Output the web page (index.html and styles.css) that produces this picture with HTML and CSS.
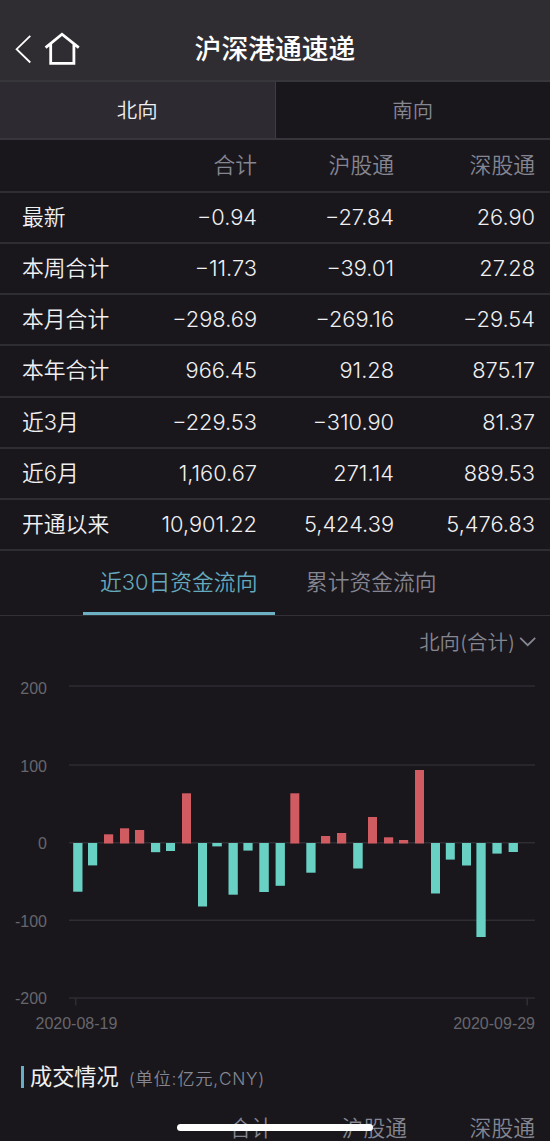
FILE: index.html
```html
<!DOCTYPE html>
<html lang="zh-CN">
<head>
  <meta charset="UTF-8" />
  <meta name="viewport" content="width=device-width, initial-scale=1.0"/>
  <title>沪深港通速递</title>
  <link rel="stylesheet" href="styles.css">
</head>
<body>
  <header class="topbar">
    <div class="topbar-icons">
      <svg class="icon-back" width="18" height="30" viewBox="0 0 18 30"><path d="M16.3 1.8 2.6 15.2 16.3 28.5"/></svg>
      <svg class="icon-home" width="36" height="34" viewBox="0 0 36 34"><path d="M1.6 15.6 18 2.2 34.8 15.6M6.7 12V31.3H29.9V12"/></svg>
    </div>
    <h1>沪深港通速递</h1>
  </header>

  <nav class="direction">
    <a class="active">北向</a>
    <a>南向</a>
  </nav>

  <section class="flow-table">
    <div class="row head"><span></span><span>合计</span><span>沪股通</span><span>深股通</span></div>
    <div class="row"><span>最新</span><span>−0.94</span><span>−27.84</span><span>26.90</span></div>
    <div class="row"><span>本周合计</span><span>−11.73</span><span>−39.01</span><span>27.28</span></div>
    <div class="row"><span>本月合计</span><span>−298.69</span><span>−269.16</span><span>−29.54</span></div>
    <div class="row"><span>本年合计</span><span>966.45</span><span>91.28</span><span>875.17</span></div>
    <div class="row"><span>近3月</span><span>−229.53</span><span>−310.90</span><span>81.37</span></div>
    <div class="row"><span>近6月</span><span>1,160.67</span><span>271.14</span><span>889.53</span></div>
    <div class="row"><span>开通以来</span><span>10,901.22</span><span>5,424.39</span><span>5,476.83</span></div>
  </section>

  <nav class="chart-tabs">
    <a class="active">近30日资金流向</a>
    <a>累计资金流向</a>
  </nav>

  <div class="chart-filter">
    <span>北向(合计)</span>
    <svg width="17" height="12" viewBox="0 0 17 12"><path d="M1.2 2.8 8.7 10.2 16.2 2.8"/></svg>
  </div>

  <svg class="chart" width="550" height="380" viewBox="0 666 550 380">
    <g class="grid">
      <path d="M69 686H535M69 765H535M69 842.7H535M69 920.2H535M69 998H535M75.7 998V1005.5M527.2 998V1005.5"/>
    </g>
    <g class="axis">
      <text x="47" y="694" text-anchor="end">200</text>
      <text x="47" y="771.5" text-anchor="end">100</text>
      <text x="47" y="849.4" text-anchor="end">0</text>
      <text x="47" y="927" text-anchor="end">-100</text>
      <text x="47" y="1004.4" text-anchor="end">-200</text>
      <text x="35.5" y="1029.4">2020-08-19</text>
      <text x="535" y="1029.4" text-anchor="end">2020-09-29</text>
    </g>
    <!-- inflow -->
    <g class="up">
      <rect x="104" y="834.3" width="9.2" height="9.2"/>
      <rect x="120" y="828.3" width="9.2" height="15.2"/>
      <rect x="135" y="830" width="9.2" height="13.5"/>
      <rect x="182" y="793.3" width="9" height="50.2"/>
      <rect x="290.3" y="793.3" width="9" height="50.2"/>
      <rect x="321" y="836" width="9.2" height="7.5"/>
      <rect x="337" y="833" width="9.2" height="10.5"/>
      <rect x="368" y="817" width="9" height="26.5"/>
      <rect x="384" y="837.3" width="9.2" height="6.2"/>
      <rect x="399" y="840" width="9.2" height="3.5"/>
      <rect x="415" y="770" width="9" height="73.5"/>
    </g>
    <!-- outflow -->
    <g class="down">
      <rect x="73.2" y="843" width="9.3" height="48.7"/>
      <rect x="88" y="843" width="9.2" height="22.4"/>
      <rect x="151" y="843" width="9.2" height="9.2"/>
      <rect x="166" y="843" width="9" height="8"/>
      <rect x="198" y="843" width="9" height="63.5"/>
      <rect x="212.3" y="843" width="9.5" height="3.4"/>
      <rect x="228.5" y="843" width="9.3" height="51.7"/>
      <rect x="243.4" y="843" width="9.2" height="7.6"/>
      <rect x="259.3" y="843" width="9.5" height="49"/>
      <rect x="275.6" y="843" width="9.3" height="42.8"/>
      <rect x="306.3" y="843" width="9.3" height="29.7"/>
      <rect x="353.2" y="843" width="9.5" height="25.5"/>
      <rect x="431" y="843" width="9" height="50.5"/>
      <rect x="445.8" y="843" width="9" height="16.6"/>
      <rect x="462" y="843" width="9" height="22.5"/>
      <rect x="476.4" y="843" width="9.3" height="94"/>
      <rect x="492.4" y="843" width="9.3" height="10.6"/>
      <rect x="508.6" y="843" width="9.3" height="9"/>
    </g>
  </svg>

  <section class="deals">
    <div class="deals-title">
      <h2>成交情况</h2>
      <small>(单位:亿元,CNY)</small>
    </div>
    <div class="deals-head"><span>合计</span><span>沪股通</span><span>深股通</span></div>
  </section>

  <div class="home-indicator"></div>
</body>
</html>
```

FILE: styles.css
```css
* {
  box-sizing: border-box;
}
html, body {
  margin: 0;
  padding: 0;
  height: 1141px;
  overflow: hidden;
}
body {
  position: relative;
  background-color: #19171c;
  color: #f0f0f2;
  font-family: Inter, "Noto Sans CJK SC", sans-serif;
  font-weight: 350;
}

svg {
  display: block;
  fill: none;
}

.topbar {
  display: grid;
  grid-template-columns: 1fr auto 1fr;
  align-items: center;
  height: 82px;
  padding: 17px 14px 0;
  background-color: #2f2d32;
  border-bottom: 2px solid #37363b;
}

.topbar h1 {
  margin: 0;
  font-size: 26.8px;
  line-height: 40px;
  font-weight: 500;
  color: #fff;
}

.topbar-icons {
  display: flex;
  align-items: center;
  gap: 12px;
}

.icon-back, .icon-home {
  stroke: #fff;
}
.icon-back { stroke-width: 1.8; }
.icon-home { stroke-width: 2.8; }

.direction {
  display: flex;
  height: 58px;
  border-bottom: 2px solid #37363c;
}

.direction a {
  flex: 1;
  line-height: 58px;
  text-align: center;
  font-size: 20.4px;
  color: #858692;
}

.direction a.active {
  background-color: #2d2b31;
  border-right: 1px solid #3d3d46;
  color: #f0f0f2;
}

.row {
  display: grid;
  grid-template-columns: 120px 115px 137px 141px;
  height: 51.2px;
  padding-left: 22px;
  border-bottom: 2px solid #2e2d32;
  font-size: 21.8px;
  line-height: 48px;
}

.row span + span {
  text-align: right;
}

.row.head {
  height: 52.8px;
  line-height: 51px;
  color: #858692;
}

.chart-tabs {
  display: flex;
  height: 65px;
  padding-left: 82.5px;
  border-bottom: 1px solid #323136;
  font-size: 21.8px;
  line-height: 62px;
  color: #858692;
}

.chart-tabs a {
  width: 192.5px;
  text-align: center;
}

.chart-tabs a.active {
  height: 64px;
  color: #64a9bd;
  border-bottom: 3px solid #6bb0c3;
}

.chart-filter {
  display: flex;
  justify-content: flex-end;
  align-items: center;
  gap: 4px;
  height: 50px;
  padding-right: 14px;
  font-size: 20.4px;
  color: #858692;
}

.chart-filter svg {
  stroke: #858692;
  stroke-width: 1.8;
}

.grid {
  stroke: #2e2d32;
  stroke-width: 1.6;
}

.axis {
  fill: #67666c;
  font-family: "Liberation Sans", Arial, sans-serif;
  font-size: 16px;
  font-weight: 400;
}

.up { fill: #d05b61; }
.down { fill: #69d0c4; }

.deals {
  padding-top: 11px;
}

.deals-title {
  display: flex;
  align-items: center;
  height: 40px;
  margin-left: 21px;
}

.deals-title h2 {
  margin: 0;
  padding-left: 6px;
  border-left: 3px solid #65afc7;
  font-size: 22.2px;
  line-height: 22px;
  font-weight: 400;
}

.deals-title small {
  padding-left: 10px;
  font-size: 17.3px;
  letter-spacing: 0.75px;
  color: #858692;
}

.deals-head {
  display: grid;
  grid-template-columns: 273px 134px 128px;
  margin-top: 11px;
  font-size: 21.8px;
  line-height: 40px;
  text-align: right;
  color: #858692;
}

.home-indicator {
  position: absolute;
  left: 177px;
  bottom: 10px;
  width: 196px;
  height: 7px;
  border-radius: 4px;
  background-color: #fff;
}
```
